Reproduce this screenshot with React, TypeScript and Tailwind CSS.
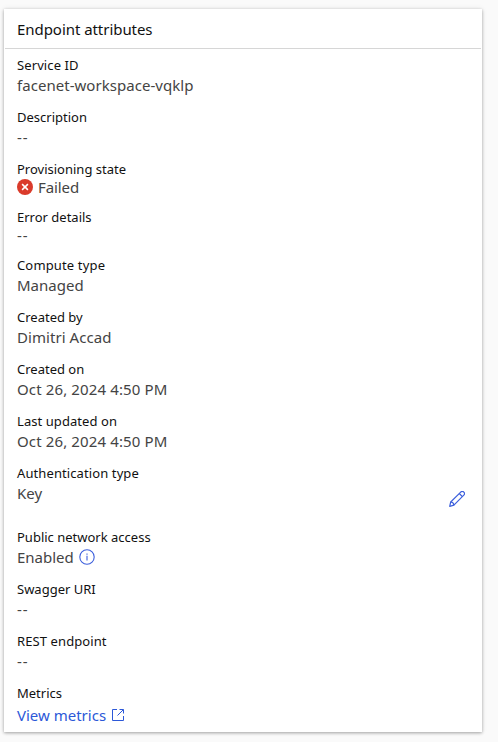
import type { ReactNode } from "react";

function FailedIcon() {
  return (
    <svg className="size-4 shrink-0" viewBox="0 0 16 16" fill="none">
      <circle cx="8" cy="8" r="8" fill="#da3b2b" />
      <path d="M5.1 5.1l5.8 5.8M10.9 5.1l-5.8 5.8" stroke="#fff" strokeWidth="1.5" />
    </svg>
  );
}

function InfoIcon() {
  return (
    <svg className="size-4 shrink-0" viewBox="0 0 16 16" fill="none">
      <circle cx="8" cy="8" r="7.2" stroke="#3c5fdc" strokeWidth="1.1" />
      <path d="M8 6.8v4.6M8 4.5v1.2" stroke="#3c5fdc" strokeWidth="1.1" />
    </svg>
  );
}

function OpenIcon() {
  return (
    <svg className="size-3 shrink-0" viewBox="0 0 12 12" fill="none" stroke="#2c58d8">
      <path d="M5 .5H.5v11h11V7M7.500 .5h4v4M11.300 .7L5.500 6.500" />
    </svg>
  );
}

function PencilIcon() {
  return (
    <svg className="size-4 shrink-0" viewBox="0 0 16 16" fill="none" stroke="#3c5fdc" strokeWidth="1.2" strokeLinejoin="round">
      <path d="M.7 15.3l1-4.3L11.7 1.1a2.15 2.15 0 0 1 3.1 3.1L4.9 14.2z" />
      <path d="M10.3 2.5l3.1 3.1M1.7 11c1.700.1 3.100 1.500 3.200 3.200" />
    </svg>
  );
}

type RowProps = {
  label: string;
  labelClass?: string;
  height?: string;
  children: ReactNode;
  valueClass?: string;
};

function Row({ label, labelClass = "", height = "h-[52px]", valueClass = "", children }: RowProps) {
  return (
    <div className={`${height} shrink-0`}>
      <dt className={`h-5 text-[13px] leading-5 whitespace-nowrap text-[#111] ${labelClass}`}>{label}</dt>
      <dd className={`flex items-center text-[15px] leading-5 whitespace-nowrap text-[#444] ${valueClass}`}>{children}</dd>
    </div>
  );
}

function Empty() {
  return <span className="tracking-[1px]">--</span>;
}

export default function App() {
  return (
    <main className="h-[742px] w-[498px] bg-[#fafafa] pt-[9px] pl-1 font-['Noto_Sans',sans-serif]">
      <section className="flex h-[723px] w-[478px] flex-col bg-white shadow-[0_1px_3px_rgba(0,0,0,0.32),0_0_6px_rgba(0,0,0,0.08)]">
        <h2 className="mx-px h-10 shrink-0 border-b border-[#d6d6d6] pl-3 text-[15px] leading-10 tracking-[-0.05px] text-[#111]">
          Endpoint attributes
        </h2>
        <dl className="flex flex-col pt-1.5 pr-[17px] pl-[13px]">
          <Row label="Service ID" labelClass="tracking-[0.1px]"><span className="tracking-[0.04px]">facenet-workspace-vqklp</span></Row>
          <Row label="Description"><Empty /></Row>
          <Row label="Provisioning state" height="h-12" valueClass="-mt-0.5 gap-[5px]">
            <FailedIcon /><span className="tracking-[-0.1px]">Failed</span>
          </Row>
          <Row label="Error details" height="h-12" valueClass="-mt-0.5"><Empty /></Row>
          <Row label="Compute type" labelClass="tracking-[0.15px]"><span>Managed</span></Row>
          <Row label="Created by"><span className="tracking-[0.06px]">Dimitri Accad</span></Row>
          <Row label="Created on"><span className="tracking-[0.13px]">Oct 26, 2024 4:50 PM</span></Row>
          <Row label="Last updated on" labelClass="tracking-[0.07px]"><span className="tracking-[0.13px]">Oct 26, 2024 4:50 PM</span></Row>
          <Row label="Authentication type" labelClass="tracking-[0.1px]" height="h-16" valueClass="justify-between">
            <span>Key</span>
            <button className="mt-1.5 -mb-1.5 block" aria-label="Edit"><PencilIcon /></button>
          </Row>
          <Row label="Public network access" valueClass="gap-[5px]"><span>Enabled</span><InfoIcon /></Row>
          <Row label="Swagger URI"><Empty /></Row>
          <Row label="REST endpoint" labelClass="tracking-[0.1px]"><Empty /></Row>
          <Row label="Metrics" height="h-11" valueClass="pt-0.5 gap-1.5">
            <a className="text-[#2c58d8]">View metrics</a><OpenIcon />
          </Row>
        </dl>
      </section>
    </main>
  );
}
